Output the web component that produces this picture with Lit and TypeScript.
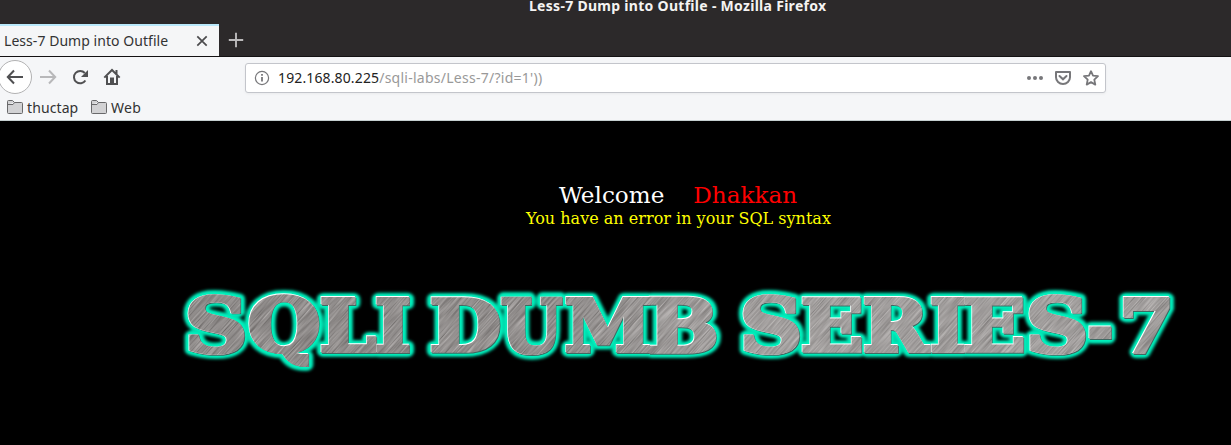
import { LitElement, html, svg, css } from "lit";
import { customElement } from "lit/decorators.js";

interface Glyph { ch: string; x0: number; x1: number; y0: number; y1: number; }

// Ink boxes of the banner letters, in banner coordinates.
const GLYPHS: Glyph[] = [
  { ch: "S", x0: 18, x1: 75, y0: 15, y1: 75 },
  { ch: "Q", x0: 79, x1: 149, y0: 14, y1: 86 },
  { ch: "L", x0: 151, x1: 207, y0: 17, y1: 73 },
  { ch: "I", x0: 206, x1: 240, y0: 17, y1: 73 },
  { ch: "D", x0: 261, x1: 330, y0: 17, y1: 73 },
  { ch: "U", x0: 331, x1: 393, y0: 17, y1: 75 },
  { ch: "M", x0: 396, x1: 480, y0: 17, y1: 73 },
  { ch: "B", x0: 479, x1: 546, y0: 17, y1: 74 },
  { ch: "S", x0: 573, x1: 630, y0: 15, y1: 75 },
  { ch: "E", x0: 632, x1: 692, y0: 17, y1: 73 },
  { ch: "R", x0: 694, x1: 761, y0: 17, y1: 73 },
  { ch: "I", x0: 761, x1: 795, y0: 17, y1: 73 },
  { ch: "E", x0: 794, x1: 854, y0: 17, y1: 73 },
  { ch: "S", x0: 859, x1: 916, y0: 15, y1: 75 },
  { ch: "-", x0: 919, x1: 942, y0: 46, y1: 59 },
  { ch: "7", x0: 953, x1: 1000, y0: 17, y1: 74 },
];

@customElement("metal-banner")
class MetalBanner extends LitElement {
  static styles = css`
    :host { display: block; }
    svg { display: block; }
    text { font: bold 100px "DejaVu Serif", serif; vector-effect: non-scaling-stroke; stroke-linejoin: miter; stroke-miterlimit: 2; }
    .halo text { fill: #00d9ac; stroke: #00d9ac; stroke-width: 13px; stroke-linejoin: round; }
    .glow text { fill: #00f5c0; stroke: #00f5c0; stroke-width: 8.5px; stroke-linejoin: round; }
    .edge text { fill: #fff; stroke: #fff; stroke-width: 4px; }
    .shade text { fill: #3f6962; stroke: #3f6962; stroke-width: 4px; }
    .face text { fill: #fff; stroke: #fff; stroke-width: 4px; }
  `;

  private letters() {
    const ctx = document.createElement("canvas").getContext("2d")!;
    ctx.font = 'bold 100px "DejaVu Serif"';
    const pad = 2;
    return GLYPHS.map((g) => {
      const m = ctx.measureText(g.ch);
      const left = -m.actualBoundingBoxLeft;
      const sx = (g.x1 - g.x0 - pad * 2) / (m.actualBoundingBoxRight - left);
      const sy = (g.y1 - g.y0 - pad * 2) / (m.actualBoundingBoxAscent + m.actualBoundingBoxDescent);
      const tx = g.x0 + pad - left * sx;
      const ty = g.y0 + pad + m.actualBoundingBoxAscent * sy;
      return svg`<text transform="translate(${tx} ${ty}) scale(${sx} ${sy})">${g.ch}</text>`;
    });
  }

  render() {
    return html`<svg width="1020" height="105" viewBox="0 0 1020 105">
      <defs>
        <filter id="soft" x="-5%" y="-30%" width="110%" height="160%"><feGaussianBlur stdDeviation="1.8" /></filter>
        <filter id="softer" x="-5%" y="-30%" width="110%" height="160%"><feGaussianBlur stdDeviation="0.9" /></filter>
        <filter id="grain" x="0" y="0" width="100%" height="100%" color-interpolation-filters="sRGB">
          <feTurbulence type="fractalNoise" baseFrequency="0.03 0.8" numOctaves="2" seed="4" />
          <feColorMatrix values="0.42 0 0 0 0.36  0.42 0 0 0 0.345  0.42 0 0 0 0.34  0 0 0 0 1" />
        </filter>
        <linearGradient id="sheen" x1="0" x2="1" y1="0" y2="0">
          <stop offset="0" stop-color="#000" stop-opacity=".02" />
          <stop offset=".4" stop-color="#fff" stop-opacity=".02" />
          <stop offset=".55" stop-color="#fff" stop-opacity=".15" />
          <stop offset="1" stop-color="#fff" stop-opacity=".14" />
        </linearGradient>
        <mask id="letters" maskUnits="userSpaceOnUse" x="0" y="0" width="1020" height="105">
          <g class="face">${this.letters()}</g>
        </mask>
      </defs>
      <g class="halo" filter="url(#soft)">${this.letters()}</g>
      <g class="glow" filter="url(#softer)">${this.letters()}</g>
      <g class="shade" transform="translate(.7 .7)">${this.letters()}</g>
      <g class="edge" transform="translate(-.7 -.7)">${this.letters()}</g>
      <g mask="url(#letters)">
        <g transform="rotate(-48 510 52)"><rect x="-60" y="-460" width="1140" height="1020" filter="url(#grain)" /></g>
        <rect width="1020" height="105" fill="url(#sheen)" />
      </g>
    </svg>`;
  }
}

@customElement("app-root")
class AppRoot extends LitElement {
  static styles = css`
    :host { display: flex; flex-direction: column; width: 1231px; height: 445px; overflow: hidden; background: #000; font-family: "Noto Sans", sans-serif; font-size: 14px; color: #333; }
    * { box-sizing: border-box; }
    svg { display: block; flex: none; }
    .top { height: 57px; background: #2c292a; border-bottom: 1px solid #141213; flex: none; display: flex; flex-direction: column; }
    .title { height: 25px; padding-left: 529px; font-weight: 700; line-height: 12px; color: #f5f3f2; white-space: pre; letter-spacing: 0.29px; }
    .tabs { display: flex; height: 32px; flex: none; }
    .tab { width: 219px; height: 32px; background: #f5f6f7; border-top: 2px solid #b9e8fa; display: flex; align-items: center; padding: 0 11px 0 4px; justify-content: space-between; white-space: pre; }
    .tabname { letter-spacing: 0.05px; padding-bottom: 2px; }
    .plus { padding: 8px 0 0 9px; }
    .bar { height: 40px; background: #f5f6f8; flex: none; display: flex; align-items: center; }
    .nav { width: 245px; display: flex; align-items: center; }
    .url { width: 861px; height: 30px; background: #fff; border: 1px solid #c3c5cb; border-radius: 3px; box-shadow: 0 1px 3px #0000000d; display: flex; align-items: center; padding: 0 6px 0 8px; margin-top: 1px; color: #999; white-space: pre; }
    .addr { margin-left: 8px; flex: 1; }
    .host { color: #222; letter-spacing: 0.13px; }
    .path { letter-spacing: 0.26px; }
    .acts { display: flex; align-items: center; gap: 12px; }
    .marks { height: 24px; background: #f5f6f8; border-bottom: 1px solid #c5cfd0; flex: none; display: flex; align-items: center; padding: 0 0 3px 7px; }
    .marks svg { margin-right: 4px; }
    .marks span { letter-spacing: 0.3px; }
    .marks .m1 { width: 64px; letter-spacing: 0.1px; }
    .page { flex: 1; display: flex; flex-direction: column; font-family: "DejaVu Serif", serif; }
    .welcome { margin: 60px 0 0 559px; height: 28px; line-height: 28px; font-size: 23.1px; color: #fff; display: flex; white-space: pre; }
    .name { color: #f00; margin-left: 29px; }
    .error { margin-left: 526px; height: 20px; line-height: 19px; font-size: 16px; color: #ff0; white-space: pre; letter-spacing: 0.02px; }
    metal-banner { margin: 51px 0 0 170px; }
  `;

  private folder() {
    return html`<svg width="16" height="14" viewBox="0 0 16 14" fill="#d2d2d4" stroke="#69696b"><path d="M.5 12.5v-11Q.5.5 1.5.5h4l2 2h7q1 0 1 1v9q0 1-1 1h-13q-1 0-1-1ZM.5 4.5h5.5l1.5-2"/></svg>`;
  }

  render() {
    return html`
      <div class="top">
        <div class="title"><span>Less-7 Dump into Outfile - Mozilla Firefox</span></div>
        <div class="tabs">
          <div class="tab"><span class="tabname">Less-7 Dump into Outfile</span>
            <svg width="12" height="12" viewBox="0 0 12 12" stroke="#4b4b4d" stroke-width="1.7"><path d="M1.3 1.3l9.4 9.4M10.7 1.3L1.3 10.7"/></svg>
          </div>
          <svg class="plus" width="26" height="24" viewBox="0 0 17 16" stroke="#bcbabb" stroke-width="1.9"><path d="M8 .8v14.4M.8 8h14.4"/></svg>
        </div>
      </div>
      <div class="bar">
        <div class="nav">
          <svg width="245" height="40" viewBox="0 57 245 40" fill="none" stroke="#505052" stroke-width="2">
            <circle cx="15" cy="77" r="16.5" fill="#fff" stroke="#b2b2b3" stroke-width="1"/>
            <path d="M23 77H8M14 70.5L7.8 77l6.2 6.5"/>
            <path d="M40 77h15M49 70.5l6.2 6.5-6.2 6.5" stroke="#b8b8ba"/>
            <path d="M85.4 80.5A6.2 6.2 0 1 1 84.8 73"/>
            <path d="M88 70v7h-7Z" fill="#505052" stroke="none"/>
            <path d="M104.3 77.6l7.7-7.6 7.7 7.6M107 76v8h10v-8M116.5 70v4"/>
            <path d="M110 77.5h4V84h-4Z" fill="#505052" stroke="none"/>
          </svg>
        </div>
        <div class="url">
          <svg width="16" height="16" viewBox="0 0 16 16" fill="none" stroke="#77777a"><circle cx="8" cy="8" r="6.6" stroke-width="1.2"/><path d="M8 7v4.5M8 4v1.8" stroke-width="1.8"/></svg>
          <span class="addr"><span class="host">192.168.80.225</span><span class="path">/sqli-labs/Less-7/?id=1'))</span></span>
          <div class="acts">
            <svg width="16" height="16" viewBox="0 0 16 16" fill="#77777a"><circle cx="2" cy="8" r="2"/><circle cx="8" cy="8" r="2"/><circle cx="14" cy="8" r="2"/></svg>
            <svg width="16" height="16" viewBox="0 0 16 16" fill="none" stroke="#77777a" stroke-width="2"><path d="M1 2h14v5.2a7 6.8 0 0 1-14 0Z" stroke-linejoin="round"/><path d="M4.5 6L8 9.3 11.5 6" stroke-linecap="round"/></svg>
            <svg width="16" height="16" viewBox="0 0 16 16" fill="none" stroke="#77777a" stroke-width="1.8" stroke-linejoin="round"><path d="M8 1.2l2 4.5 5 .5-3.7 3.4 1 5L8 12.1l-4.3 2.5 1-5L1 6.2l5-.5Z"/></svg>
          </div>
        </div>
      </div>
      <div class="marks">${this.folder()}<span class="m1">thuctap</span>${this.folder()}<span>Web</span></div>
      <div class="page">
        <div class="welcome"><span>Welcome</span><span class="name">Dhakkan</span></div>
        <div class="error"><span>You have an error in your SQL syntax</span></div>
        <metal-banner></metal-banner>
      </div>`;
  }
}
